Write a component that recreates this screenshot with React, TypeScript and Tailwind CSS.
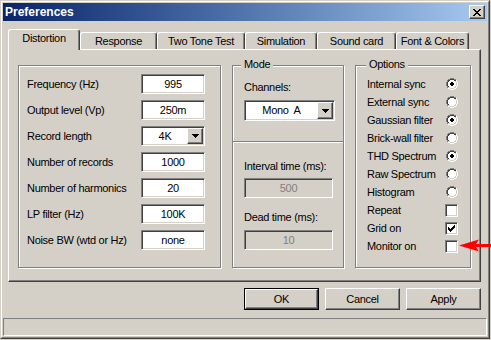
import React from 'react'

// classic win2k bevels
const sunken = 'border border-t-[#808080] border-l-[#808080] border-b-white border-r-white shadow-[inset_1px_1px_0_#404040,inset_-1px_-1px_0_#d4d0c8]'
const raised = 'border border-t-white border-l-white border-b-[#404040] border-r-[#404040] shadow-[inset_-1px_-1px_0_#808080,inset_1px_1px_0_#d4d0c8]'
const etched = 'border border-[#808080] shadow-[inset_1px_1px_0_#ffffff,1px_1px_0_#ffffff]'

const colors: Record<string, string> = {
  X: '#000000',
  G: '#808080',
  D: '#404040',
  W: '#ffffff',
  L: '#d4d0c8',
}

const Pixels = ({ rows }: { rows: string[] }) => (
  <svg width={rows[0].length} height={rows.length} shapeRendering="crispEdges" className="block">
    {rows.map((row, y) =>
      row.split('').map((c, x) =>
        colors[c] ? <rect key={x + '-' + y} x={x} y={y} width={1} height={1} fill={colors[c]} /> : null
      )
    )}
  </svg>
)

const closeX = ['XX....XX', '.XX..XX.', '..XXXX..', '...XX...', '..XXXX..', '.XX..XX.', 'XX....XX']
const arrowDown = ['XXXXXXX', '.XXXXX.', '..XXX..', '...X...']
const checkMark = ['......X', '.....XX', 'X...XXX', 'XX.XXX.', 'XXXXX..', '.XXX...', '..X....']

const radioOff = [
  '....GGGG....',
  '..GGDDDDGG..',
  '.GDDWWWWDDW.',
  '.GDWWWWWWLW.',
  'GDWWWWWWWWLW',
  'GDWWWWWWWWLW',
  'GDWWWWWWWWLW',
  'GDWWWWWWWWLW',
  '.GDWWWWWWLW.',
  '.GLLWWWWLLW.',
  '..WWLLLLWW..',
  '....WWWW....',
]
const radioOn = radioOff.map((row, y) => {
  if (y < 4 || y > 7) return row
  const dot = y === 4 || y === 7 ? '.XX.' : 'XXXX'
  return row.slice(0, 4) + dot.split('').map((c, i) => (c === 'X' ? 'X' : row[4 + i])).join('') + row.slice(8)
})

const Field = ({ value, disabled, w }: { value: string; disabled?: boolean; w: string }) => (
  <div className={`${sunken} ${w} h-[20px] flex items-center justify-center ${disabled ? 'bg-[#d4d0c8] text-[#808080]' : 'bg-white'}`}>
    {value}
  </div>
)

const Combo = ({ value, w, h }: { value: string; w: string; h: string }) => (
  <div className={`${sunken} ${w} ${h} bg-white flex items-stretch p-px`}>
    <div className="flex-1 flex items-center justify-center whitespace-pre">{value}</div>
    <div className={`${raised} w-[16px] flex items-center justify-center bg-[#d4d0c8]`}>
      <Pixels rows={arrowDown} />
    </div>
  </div>
)

const Tab = ({ label, w, active }: { label: string; w: string; active?: boolean }) => (
  <div
    className={`${w} border-t border-l border-t-white border-l-white rounded-tl-[3px] rounded-tr-[3px] flex items-center justify-center bg-[#d4d0c8] whitespace-nowrap ${
      active
        ? 'h-[21px] -mb-px relative z-10 pb-[3px] border-r border-r-[#404040] shadow-[inset_-1px_0_0_#808080]'
        : 'h-[17px] border-r border-r-[#404040] shadow-[inset_-1px_0_0_#808080]'
    }`}
  >
    {label}
  </div>
)

const distRows: { label: string; value: string; combo?: boolean }[] = [
  { label: 'Frequency (Hz)', value: '995' },
  { label: 'Output level (Vp)', value: '250m' },
  { label: 'Record length', value: '4K', combo: true },
  { label: 'Number of records', value: '1000' },
  { label: 'Number of harmonics', value: '20' },
  { label: 'LP filter (Hz)', value: '100K' },
  { label: 'Noise BW (wtd or Hz)', value: 'none' },
]

const options: { label: string; kind: 'radio' | 'check'; on: boolean }[] = [
  { label: 'Internal sync', kind: 'radio', on: true },
  { label: 'External sync', kind: 'radio', on: false },
  { label: 'Gaussian filter', kind: 'radio', on: true },
  { label: 'Brick-wall filter', kind: 'radio', on: false },
  { label: 'THD Spectrum', kind: 'radio', on: true },
  { label: 'Raw Spectrum', kind: 'radio', on: false },
  { label: 'Histogram', kind: 'radio', on: false },
  { label: 'Repeat', kind: 'check', on: false },
  { label: 'Grid on', kind: 'check', on: true },
  { label: 'Monitor on', kind: 'check', on: false },
]

const App = () => {
  return (
    <div className="relative w-[491px] h-[340px] bg-[#d4d0c8] font-['Liberation_Sans',Arial,sans-serif] text-[11px] leading-[13px] tracking-[-0.3px] text-black overflow-hidden select-none">
      <div className="w-[490px] h-[339px] border border-t-[#d4d0c8] border-l-[#d4d0c8] border-r-[#404040] border-b-[#404040]">
        <div className="h-full border border-t-white border-l-white border-r-[#808080] border-b-[#808080] p-px flex flex-col">
          {/* title bar */}
          <div className="h-[18px] bg-linear-to-r from-[#0a246a] to-[#a6caf0] flex items-center justify-between pl-[2px] pr-[2px]">
            <span className="text-white font-bold text-[12px] leading-[14px] tracking-normal">Preferences</span>
            <div className={`${raised} w-[16px] h-[14px] bg-[#d4d0c8] flex items-center justify-center`}>
              <Pixels rows={closeX} />
            </div>
          </div>

          {/* tabs */}
          <div className="flex items-end h-[20px] mt-[8px] pl-[5px] relative z-10">
            <Tab label="Distortion" w="w-[72px]" active />
            <Tab label="Response" w="w-[77px]" />
            <Tab label="Two Tone Test" w="w-[88px]" />
            <Tab label="Simulation" w="w-[72px]" />
            <Tab label="Sound card" w="w-[79px]" />
            <Tab label="Font & Colors" w="w-[73px]" />
          </div>

          {/* tab page */}
          <div className="ml-[5px] w-[473px] h-[233px] border border-t-white border-l-white border-r-[#404040] border-b-[#404040] shadow-[inset_-1px_-1px_0_#808080] pl-[9px] pt-[15px] flex gap-[11px]">
            {/* distortion group */}
            <div className={`${etched} w-[203px] h-[203px] pt-[8px] flex flex-col gap-[6px]`}>
              {distRows.map((r) => (
                <div key={r.label} className="flex items-center h-[20px]">
                  <span className="w-[122px] pl-[8px]">{r.label}</span>
                  {r.combo ? <Combo value={r.value} w="w-[64px]" h="h-[20px]" /> : <Field value={r.value} w="w-[64px]" />}
                </div>
              ))}
            </div>

            {/* mode group */}
            <div className={`${etched} relative w-[112px] h-[203px] flex flex-col`}>
              <span className="absolute -top-[8px] left-[8px] px-[3px] bg-[#d4d0c8]">Mode</span>
              <div className="h-[75px] pl-[11px] pt-[15px] flex flex-col">
                <span>Channels:</span>
                <div className="mt-[6px]">
                  <Combo value="Mono  A" w="w-[91px]" h="h-[21px]" />
                </div>
              </div>
              <div className="h-px bg-[#808080]" />
              <div className="h-px bg-white" />
              <div className="pl-[11px] pt-[17px] flex flex-col">
                <span>Interval time (ms):</span>
                <div className="mt-[5px]">
                  <Field value="500" w="w-[89px]" disabled />
                </div>
                <span className="mt-[13px]">Dead time (ms):</span>
                <div className="mt-[6px]">
                  <Field value="10" w="w-[89px]" disabled />
                </div>
              </div>
            </div>

            {/* options group */}
            <div className={`${etched} relative w-[116px] h-[203px] pt-[9px] flex flex-col`}>
              <span className="absolute -top-[8px] left-[10px] px-[3px] bg-[#d4d0c8]">Options</span>
              {options.map((o) => (
                <div key={o.label} className="h-[18px] flex items-center justify-between pl-[11px] pr-[12px]">
                  <span>{o.label}</span>
                  <div className="w-[13px] flex justify-center">
                    {o.kind === 'radio' ? (
                      <Pixels rows={o.on ? radioOn : radioOff} />
                    ) : (
                      <div className={`${sunken} w-[13px] h-[13px] bg-white flex items-center justify-center`}>
                        {o.on && <Pixels rows={checkMark} />}
                      </div>
                    )}
                  </div>
                </div>
              ))}
            </div>
          </div>

          {/* buttons */}
          <div className="mt-[6px] h-[22px] flex justify-end gap-[6px] pr-[6px]">
            <div className="w-[75px] h-full border border-black">
              <div className={`${raised} h-full flex items-center justify-center`}>OK</div>
            </div>
            <div className={`${raised} w-[75px] h-full flex items-center justify-center`}>Cancel</div>
            <div className={`${raised} w-[75px] h-full flex items-center justify-center`}>Apply</div>
          </div>

          {/* status bar */}
          <div className="mt-[8px] h-[18px] border border-t-[#808080] border-l-[#808080] border-b-white border-r-white" />
        </div>
      </div>

      {/* red annotation arrow pointing at "Monitor on" */}
      <svg className="absolute left-[459px] top-[239px]" width="32" height="13" viewBox="0 0 32 13">
        <polygon points="0,6.5 20,0.5 17,5 32,5 32,8 17,8 20,12.5" fill="#ff0000" />
      </svg>
    </div>
  )
}

export default App
